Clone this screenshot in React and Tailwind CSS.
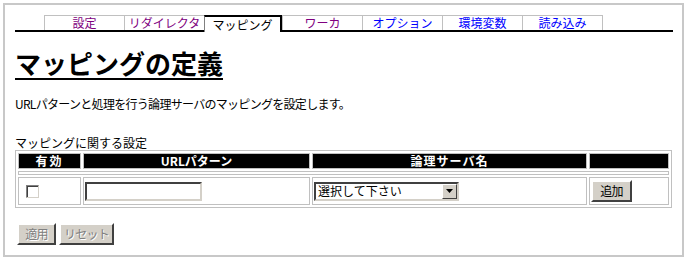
import React from 'react';

const tabs = [
  { label: '設定', color: 'text-[#800080]' },
  { label: 'リダイレクタ', color: 'text-[#800080]' },
  { label: 'マッピング', active: true },
  { label: 'ワーカ', color: 'text-[#800080]' },
  { label: 'オプション', color: 'text-[#0000ff]' },
  { label: '環境変数', color: 'text-[#0000ff]' },
  { label: '読み込み', color: 'text-[#0000ff]' },
];

const font = { fontFamily: '"MS PGothic", "Noto Sans CJK JP", "Liberation Sans", sans-serif' };

function Tab({ tab }) {
  if (tab.active) {
    return (
      <div className="w-[78px] h-[17px] -mb-[2px] border-t-2 border-l border-r-2 border-t-black border-l-[#808080] border-r-black bg-white flex items-center justify-center text-[12px] leading-none text-black">
        {tab.label}
      </div>
    );
  }
  return (
    <div className={`w-[80px] h-[15px] mt-[1px] border-t border-l border-[#c0c0c0] flex items-center justify-center text-[12px] leading-none ${tab.color}`}>
      {tab.label}
    </div>
  );
}

function Button({ children, disabled, w }) {
  return (
    <button
      className={`h-[22px] ${w} px-0 bg-[#d4d0c8] border-2 border-t-white border-l-white border-r-[#404040] border-b-[#404040] text-[12px] leading-none tracking-[-0.8px] ${
        disabled ? 'text-[#808080] [text-shadow:1px_1px_0_#ffffff]' : 'text-black'
      }`}
    >
      {children}
    </button>
  );
}

export default function App() {
  return (
    <div className="w-[687px] h-[260px] bg-white p-[3px]" style={font}>
      <div className="h-[254px] border-2 border-[#c8c8c8] bg-white">
        {/* タブ */}
        <div className="ml-[10px] w-[658px] mt-[9px] border-b-2 border-black flex items-end pl-[29px]">
          {tabs.map((t) => (
            <Tab key={t.label} tab={t} />
          ))}
          <div className="w-0 h-[15px] border-l border-[#c0c0c0]" />
        </div>

        <div className="pl-[10px]">
          <h1 className="mt-[16px] text-[26px] leading-[30px] font-bold underline underline-offset-[4px] decoration-2 text-black">
            マッピングの定義
          </h1>

          <p className="mt-[18px] text-[12px] leading-[16px] tracking-[-0.7px] text-black">
            URLパターンと処理を行う論理サーバのマッピングを設定します。
          </p>

          <p className="mt-[23px] text-[12px] leading-[16px] text-black">マッピングに関する設定</p>

          <table className="w-[657px] border-separate border-spacing-[2px] border border-[#c0c0c0] text-[12px] -mt-[1px]">
            <thead>
              <tr>
                <th className="w-[63px] h-[16px] bg-black text-white font-bold border border-[#c0c0c0] p-0 leading-[14px] tracking-[2px]">有効</th>
                <th className="w-[227px] bg-black text-white font-bold border border-[#c0c0c0] p-0 leading-[14px]">URLパターン</th>
                <th className="w-[275px] bg-black text-white font-bold border border-[#c0c0c0] p-0 leading-[14px] tracking-[1px]">論理サーバ名</th>
                <th className="bg-black border border-[#c0c0c0] p-0" />
              </tr>
            </thead>
            <tbody>
              <tr>
                <td colSpan={4} className="h-[4px] border border-[#c0c0c0] p-0" />
              </tr>
              <tr>
                <td className="h-[28px] border border-[#c0c0c0] pl-[7px] py-0 align-middle">
                  <div className="w-[13px] h-[13px] bg-white border border-t-[#808080] border-l-[#808080] border-r-[#d4d0c8] border-b-[#d4d0c8] shadow-[inset_1px_1px_0_#404040]" />
                </td>
                <td className="border border-[#c0c0c0] pl-[1px] py-0 align-middle">
                  <div className="w-[117px] h-[19px] bg-white border-2 border-t-[#404040] border-l-[#404040] border-r-[#d4d0c8] border-b-[#d4d0c8]" />
                </td>
                <td className="border border-[#c0c0c0] pl-[1px] py-0 align-middle">
                  <div className="w-[145px] h-[19px] bg-white border-2 border-t-[#404040] border-l-[#404040] border-r-[#d4d0c8] border-b-[#d4d0c8] flex items-center">
                    <span className="flex-1 pl-[2px] text-[12px] leading-none text-black">選択して下さい</span>
                    <span className="w-[15px] h-[15px] bg-[#d4d0c8] border border-t-white border-l-white border-r-[#404040] border-b-[#404040] flex items-center justify-center">
                      <svg width="7" height="4" viewBox="0 0 7 4">
                        <path d="M0 0h7L3.5 4z" fill="#000" />
                      </svg>
                    </span>
                  </div>
                </td>
                <td className="border border-[#c0c0c0] pl-[1px] py-0 align-middle">
                  <Button w="w-[41px]">追加</Button>
                </td>
              </tr>
            </tbody>
          </table>

          <div className="mt-[15px] ml-[2px] flex gap-[3px]">
            <Button disabled w="w-[39px]">適用</Button>
            <Button disabled w="w-[55px]">リセット</Button>
          </div>
        </div>
      </div>
    </div>
  );
}
